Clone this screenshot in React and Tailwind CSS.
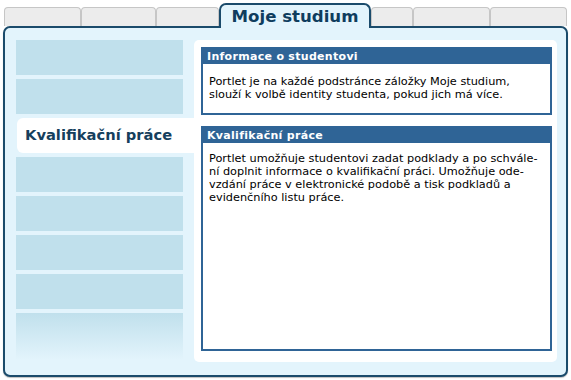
import React from 'react';

const tabs = [
  { w: 'w-[77px]' },
  { w: 'w-[75px]' },
  { w: 'w-[63px]' },
];
const tabsRight = [
  { w: 'w-[42px]' },
  { w: 'w-[77px]' },
  { w: 'w-[77px]' },
];

const Tab = ({ w }) => (
  <div className={`${w} h-[19px] mb-[2px] bg-[#ececec] border border-b-0 border-[#c6c6c6] rounded-t-[4px]`}></div>
);

const Portlet = ({ title, className, bodyClass, children }) => (
  <div className={`border-2 border-[#2f6496] bg-white flex flex-col ${className}`}>
    <div className="h-[15px] bg-[#2f6496] text-white font-bold text-[11px] leading-[15px] pl-[4px] tracking-[0.3px]">
      {title}
    </div>
    <div className={`px-[6px] text-[11.3px] leading-[13px] text-black ${bodyClass}`}>{children}</div>
  </div>
);

const App = () => {
  return (
    <div className="w-[571px] h-[380px] bg-white pt-[3px] px-[3px] font-['DejaVu_Sans',sans-serif]">
      {/* tab bar */}
      <div className="relative z-10 flex items-end h-[25px] -mb-[2px] pl-[1px]">
        {tabs.map((t, i) => (
          <Tab key={i} w={t.w} />
        ))}
        <div className="w-[152px] h-[25px] bg-[#e3f4fc] border-2 border-b-0 border-[#1b4b6b] rounded-t-[7px] flex items-center justify-center pt-[1px]">
          <span className="text-[16.6px] font-bold text-[#0f3d5e] leading-none">Moje studium</span>
        </div>
        {tabsRight.map((t, i) => (
          <Tab key={i} w={t.w} />
        ))}
      </div>

      {/* main panel */}
      <div className="h-[351px] bg-[#e3f4fc] border-2 border-[#1b4b6b] rounded-[7px] shadow-[0_1px_1px_rgba(0,0,0,0.25)] flex pt-[12px] pl-[11px] pr-[9px] pb-[13px]">
        {/* left menu */}
        <div className="w-[178px] flex flex-col gap-[4px]">
          <div className="w-[167px] h-[35px] bg-[#c0e0ec]"></div>
          <div className="w-[167px] h-[35px] bg-[#c0e0ec]"></div>
          <div className="ml-[1px] w-[177px] h-[35px] bg-white rounded-l-[6px] flex items-center pl-[8px]">
            <span className="text-[14.7px] font-bold text-[#163f5d] leading-none">Kvalifikační práce</span>
          </div>
          <div className="w-[167px] h-[35px] bg-[#c0e0ec]"></div>
          <div className="w-[167px] h-[35px] bg-[#c0e0ec]"></div>
          <div className="w-[167px] h-[35px] bg-[#c0e0ec]"></div>
          <div className="w-[167px] h-[35px] bg-[#c0e0ec]"></div>
          <div className="w-[167px] h-[47px] bg-gradient-to-b from-[#c0e0ec] to-[#e3f4fc]"></div>
        </div>

        {/* content */}
        <div className="flex-1 bg-white rounded-[5px] pt-[7px] pl-[7px] pr-[5px] pb-[11px] flex flex-col gap-[11px]">
          <Portlet title="Informace o studentovi" className="h-[68px]" bodyClass="pt-[11px]">
            Portlet je na každé podstránce záložky Moje studium,
            <br />
            slouží k volbě identity studenta, pokud jich má více.
          </Portlet>
          <Portlet title="Kvalifikační práce" className="flex-1" bodyClass="pt-[9px]">
            Portlet umožňuje studentovi zadat podklady a po schvále-
            <br />
            ní doplnit informace o kvalifikační práci. Umožňuje ode-
            <br />
            vzdání práce v elektronické podobě a tisk podkladů a
            <br />
            evidenčního listu práce.
          </Portlet>
        </div>
      </div>
    </div>
  );
};

export default App;
